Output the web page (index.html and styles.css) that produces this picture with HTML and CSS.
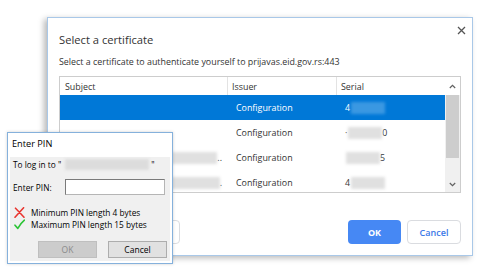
FILE: index.html
```html
<!DOCTYPE html>
<html lang="en">
<head>
<meta charset="utf-8">
<title>Select a certificate</title>
<link rel="stylesheet" href="styles.css">
</head>
<body>
<div class="screen">
  <section class="dialog">
    <header class="dlg-head">
      <h1 class="dlg-title">Select a certificate</h1>
      <button class="close" aria-label="Close"><svg width="9" height="9" viewBox="0 0 9 9"><path d="M1 1L8 8M8 1L1 8" stroke="#555" stroke-width="1.3" fill="none"/></svg></button>
    </header>
    <p class="prompt">Select a certificate to authenticate yourself to prijavas.eid.gov.rs:443</p>
    <div class="table">
      <div class="grid">
        <div class="row head">
          <div class="cell subj">Subject</div>
          <div class="cell iss">Issuer</div>
          <div class="cell ser">Serial</div>
        </div>
        <div class="row sel">
          <div class="cell subj"><span class="blur b-subj"></span></div>
          <div class="cell iss">Configuration</div>
          <div class="cell ser">4<span class="blur b-ser"></span></div>
        </div>
        <div class="row">
          <div class="cell subj end short"><span class="blur b-subj low"></span>.</div>
          <div class="cell iss">Configuration</div>
          <div class="cell ser">·<span class="blur b-ser"></span>0</div>
        </div>
        <div class="row">
          <div class="cell subj end"><span class="blur b-subj"></span>..</div>
          <div class="cell iss">Configuration</div>
          <div class="cell ser"><span class="blur b-ser"></span>5</div>
        </div>
        <div class="row">
          <div class="cell subj end"><span class="blur b-subj"></span>.</div>
          <div class="cell iss">Configuration</div>
          <div class="cell ser">4<span class="blur b-ser"></span></div>
        </div>
      </div>
      <div class="scroll">
        <div class="arrow"><svg width="7" height="5" viewBox="0 0 7 5"><path d="M0.8 4L3.5 1.3L6.2 4" stroke="#606060" stroke-width="1.2" fill="none"/></svg></div>
        <div class="thumb"></div>
        <div class="track"></div>
        <div class="arrow"><svg width="7" height="5" viewBox="0 0 7 5"><path d="M0.8 1L3.5 3.7L6.2 1" stroke="#606060" stroke-width="1.2" fill="none"/></svg></div>
      </div>
    </div>
    <div class="actions">
      <button class="btn info" aria-label="Certificate information"></button>
      <div class="spacer"></div>
      <button class="btn primary">OK</button>
      <button class="btn secondary">Cancel</button>
    </div>
  </section>

  <section class="pin">
    <div class="pin-title">Enter PIN</div>
    <div class="pin-body">
      <div class="login">To log in to "<span class="blur b-login"></span>"</div>
      <div class="pinrow">
        <label class="pin-label">Enter PIN:</label>
        <div class="pin-input"></div>
      </div>
      <div class="rules">
        <div class="rule">
          <svg class="ico" width="11" height="11" viewBox="0 0 11 11"><path d="M1.5 1.2Q5.5 5.2 10 10.2M9.6 0.8Q5.2 5.6 1 10.2" stroke="#e8352f" stroke-width="1.6" fill="none" stroke-linecap="round"/></svg>
          <span>Minimum PIN length 4 bytes</span>
        </div>
        <div class="rule">
          <svg class="ico" width="11" height="11" viewBox="0 0 11 11"><path d="M1 6.2L3.8 9.4Q6.5 4.5 10.4 1.2" stroke="#2cc436" stroke-width="1.6" fill="none" stroke-linecap="round" stroke-linejoin="round"/></svg>
          <span>Maximum PIN length 15 bytes</span>
        </div>
      </div>
      <div class="pin-actions">
        <button class="wbtn disabled">OK</button>
        <button class="wbtn">Cancel</button>
      </div>
    </div>
  </section>
</div>
</body>
</html>
```

FILE: styles.css
```css
html, body {
  margin: 0;
  padding: 0;
  background: #ffffff;
}

body {
  font-family: "Open Sans", "Noto Sans", sans-serif;
  color: #333333;
}

.screen {
  position: relative;
  width: 478px;
  height: 270px;
  box-sizing: border-box;
  padding: 17px 0 0 47px;
  overflow: hidden;
}

/* ---------- main dialog ---------- */
.dialog {
  width: 426px;
  height: 239px;
  box-sizing: border-box;
  border: 1px solid #a9c8e8;
  background: #ffffff;
  box-shadow: -3px 2px 6px rgba(0, 0, 0, 0.28);
  padding: 0 11px 11px 11px;
  display: flex;
  flex-direction: column;
}

.dlg-head {
  display: flex;
  justify-content: space-between;
  align-items: flex-start;
}

.dlg-title {
  margin: 14px 0 0 0;
  font-size: 11.2px;
  font-weight: 400;
  line-height: 16px;
  color: #333333;
}

.close {
  margin: 8px -5px 0 0;
  padding: 0;
  border: 0;
  background: transparent;
  width: 9px;
  height: 9px;
  display: flex;
}

.prompt {
  margin: 8px 0 0 0;
  font-size: 8.9px;
  line-height: 12px;
  color: #333333;
}

.table {
  margin-top: 8px;
  height: 117px;
  box-sizing: border-box;
  border: 1px solid #cdcdcd;
  display: flex;
}

.grid {
  width: 385px;
  overflow: hidden;
}

.row {
  display: grid;
  grid-template-columns: 168px 109px 108px;
  height: 25px;
  align-items: center;
  font-size: 8.9px;
  color: #333333;
}

.row.head {
  height: 18px;
  align-items: stretch;
}

.row.head .cell {
  display: flex;
  align-items: center;
  padding-left: 4px;
}

.row.head .subj,
.row.head .iss {
  border-right: 1px solid #e3e3e3;
}

.row.head .subj {
  padding-left: 5px;
}

.cell {
  white-space: nowrap;
  overflow: hidden;
  box-sizing: border-box;
  padding-left: 8px;
  display: flex;
  align-items: center;
  height: 100%;
}

.row.sel {
  background: #0078d7;
  color: #ffffff;
}

.cell.subj.end {
  justify-content: flex-end;
  padding-right: 6px;
}

.cell.subj.end.short {
  padding-right: 61px;
  align-items: flex-start;
  padding-top: 6px;
}

.blur {
  display: inline-block;
  height: 12px;
  background: #e0e0e0;
  filter: blur(1.5px);
}

.b-subj {
  width: 110px;
}

.b-subj.low {
  margin-top: 8px;
  width: 80px;
  height: 9px;
}

.b-ser {
  width: 34px;
  margin-left: 1px;
}

.row.sel .blur {
  background: #3a98e2;
}

.row.sel .b-subj {
  display: none;
}

/* scrollbar */
.scroll {
  width: 15px;
  display: flex;
  flex-direction: column;
  background: #f0f0f0;
}

.arrow {
  height: 16px;
  display: flex;
  align-items: center;
  justify-content: center;
  background: #f0f0f0;
}

.scroll .arrow:first-child {
  height: 18px;
  background: #ffffff;
}

.thumb {
  height: 63px;
  margin: 0 1px;
  background: #cdcdcd;
}

.track {
  flex: 1;
}

/* actions */
.actions {
  margin-top: auto;
  height: 24px;
  display: flex;
}

.btn {
  height: 24px;
  box-sizing: border-box;
  border-radius: 4px;
  font-family: "Open Sans", "Noto Sans", sans-serif;
  font-size: 9px;
  padding: 0;
  cursor: default;
}

.btn.info {
  width: 121px;
  border: 1px solid #dadce0;
  background: #ffffff;
  color: #3b78e7;
}

.spacer {
  flex: 1;
}

.btn.primary {
  width: 53px;
  border: 0;
  background: #4688f4;
  color: #ffffff;
  font-weight: 700;
}

.btn.secondary {
  width: 54px;
  margin-left: 6px;
  border: 1px solid #dadce0;
  background: #ffffff;
  color: #3b78e7;
  font-weight: 600;
}

/* ---------- PIN dialog ---------- */
.pin {
  position: absolute;
  left: 7px;
  top: 132px;
  width: 166px;
  height: 132px;
  box-sizing: border-box;
  border: 1px solid #85b1dc;
  background: #ffffff;
  padding: 0 2px 2px 2px;
  display: flex;
  flex-direction: column;
  box-shadow: 0 0 3px rgba(0, 0, 0, 0.18);
  color: #000000;
}

.pin-title {
  height: 24px;
  line-height: 22px;
  padding-left: 2px;
  font-size: 9.2px;
}

.pin-body {
  flex: 1;
  background: #f0f0f0;
  padding: 0 3px 0 3px;
  display: flex;
  flex-direction: column;
  font-size: 8.3px;
}

.login {
  height: 14px;
  display: flex;
  align-items: center;
  white-space: nowrap;
}

.b-login {
  width: 84px;
  height: 11px;
  margin: 0 2px 0 4px;
  background: #dcdcdc;
}

.pinrow {
  margin-top: 8px;
  height: 16px;
  display: flex;
  align-items: center;
}

.pin-label {
  width: 52px;
}

.pin-input {
  width: 100px;
  height: 16px;
  box-sizing: border-box;
  background: #ffffff;
  border: 1px solid #b5b5b5;
  border-top-color: #7a7a7a;
  border-left-color: #7a7a7a;
}

.rules {
  margin-top: 11px;
  display: flex;
  flex-direction: column;
}

.rule {
  height: 12px;
  display: flex;
  align-items: center;
  gap: 6px;
  padding-left: 1px;
  white-space: nowrap;
}

.ico {
  flex: none;
}

.pin-actions {
  margin-top: 11px;
  display: flex;
  justify-content: flex-end;
  gap: 11px;
}

.wbtn {
  width: 59px;
  height: 17px;
  box-sizing: border-box;
  padding: 0;
  border: 1px solid #adadad;
  background: #e1e1e1;
  font-family: "Open Sans", "Noto Sans", sans-serif;
  font-size: 8.5px;
  color: #000000;
  border-radius: 0;
}

.wbtn.disabled {
  background: #cccccc;
  border-color: #bfbfbf;
  color: #8a8a8a;
}
```
